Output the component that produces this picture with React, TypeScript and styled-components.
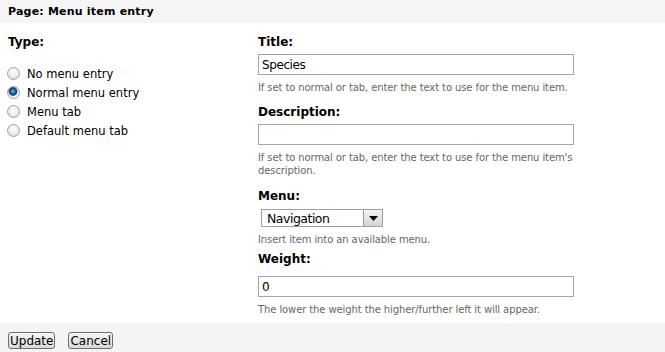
import React from 'react';
import styled, { createGlobalStyle } from 'styled-components';

const GlobalStyle = createGlobalStyle`
  html, body {
    margin: 0;
    padding: 0;
    background: #ffffff;
    font-family: 'DejaVu Sans', Verdana, sans-serif;
    color: #000000;
  }
`;

const Page = styled.div`
  width: 665px;
  height: 352px;
  display: flex;
  flex-direction: column;
  overflow: hidden;
`;

const Header = styled.div`
  height: 23px;
  display: flex;
  align-items: center;
  padding: 0 8px;
  background: #f5f5f5;
  font-size: 11px;
  font-weight: bold;
  letter-spacing: 0.2px;
`;

const Body = styled.div`
  flex: 1;
  display: grid;
  grid-template-columns: 250px 1fr;
  padding: 11px 8px 0;
`;

const Column = styled.div`
  display: flex;
  flex-direction: column;
`;

const Label = styled.div<{ $gap?: number }>`
  font-size: 12px;
  font-weight: bold;
  line-height: 16px;
  margin-bottom: ${(p) => p.$gap ?? 4}px;
`;

const RadioList = styled.div`
  display: flex;
  flex-direction: column;
  gap: 3px;
  margin-top: 12px;
`;

const RadioRow = styled.label`
  display: flex;
  align-items: flex-start;
  gap: 7px;
  margin-left: -1px;
  font-size: 11.5px;
  line-height: 16px;
`;

const RadioDot = styled.span<{ $checked?: boolean }>`
  box-sizing: border-box;
  margin-top: 1px;
  width: 13px;
  height: 13px;
  border-radius: 50%;
  border: 1px solid #a2a2a2;
  background: ${(p) =>
    p.$checked
      ? 'radial-gradient(circle at 45% 40%, #8fd0f5 0, #2a7fc0 1.5px, #0d3e6b 3.5px, #5a6f80 4.2px, #e4e4e4 4.8px, #fafafa 6px)'
      : 'radial-gradient(circle at 50% 35%, #ffffff 0, #ececec 55%, #d2d2d2 100%)'};
`;

const Field = styled.div<{ $top?: number }>`
  display: flex;
  flex-direction: column;
  margin-top: ${(p) => p.$top ?? 0}px;
`;

const TextInput = styled.input`
  box-sizing: border-box;
  width: 316px;
  height: 21px;
  border: 1px solid #a5a5a5;
  padding: 0 3px;
  font-family: 'DejaVu Sans', Verdana, sans-serif;
  font-size: 12px;
  letter-spacing: -0.4px;
  color: #000;
  outline: none;
`;

const Help = styled.div`
  font-size: 10px;
  letter-spacing: -0.1px;
  line-height: 13px;
  color: #666666;
  margin-top: 6px;
  width: 322px;
`;

const Select = styled.div`
  box-sizing: border-box;
  margin-top: 1px;
  margin-left: 3px;
  width: 122px;
  height: 18px;
  border: 1px solid #a0a0a0;
  display: flex;
  align-items: center;
  justify-content: space-between;
  font-size: 12.5px;
  letter-spacing: -0.5px;
  padding-left: 5px;
  background: #fff;
`;

const SelectButton = styled.span`
  box-sizing: border-box;
  width: 19px;
  height: 16px;
  border-left: 1px solid #9a9a9a;
  background: linear-gradient(#f4f4f4, #d4d4d4);
  display: flex;
  align-items: center;
  justify-content: center;
`;

const Footer = styled.div`
  height: 29px;
  box-sizing: border-box;
  background: #f4f4f4;
  display: flex;
  align-items: flex-start;
  gap: 13px;
  padding: 9px 8px 0;
`;

const Button = styled.button`
  font-family: 'DejaVu Sans', Verdana, sans-serif;
  font-size: 12px;
  height: 17px;
  padding: 0 1px;
  border: 1px solid #6e6e6e;
  border-radius: 3px;
  background: linear-gradient(#f6f6f6, #dadada);
  color: #000;
  line-height: 14px;
`;

const types = ['No menu entry', 'Normal menu entry', 'Menu tab', 'Default menu tab'];

export default function App() {
  return (
    <Page>
      <GlobalStyle />
      <Header>Page: Menu item entry</Header>
      <Body>
        <Column>
          <Label>Type:</Label>
          <RadioList>
            {types.map((t, i) => (
              <RadioRow key={t}>
                <RadioDot $checked={i === 1} />
                {t}
              </RadioRow>
            ))}
          </RadioList>
        </Column>
        <Column>
          <Field>
            <Label>Title:</Label>
            <TextInput defaultValue="Species" />
            <Help>If set to normal or tab, enter the text to use for the menu item.</Help>
          </Field>
          <Field $top={10}>
            <Label>Description:</Label>
            <TextInput defaultValue="" />
            <Help>
              If set to normal or tab, enter the text to use for the menu item's description.
            </Help>
          </Field>
          <Field $top={11}>
            <Label>Menu:</Label>
            <Select>
              Navigation
              <SelectButton>
                <svg width="9" height="5" viewBox="0 0 9 5">
                  <path d="M0 0h9L4.5 5z" fill="#000" />
                </svg>
              </SelectButton>
            </Select>
            <Help>Insert item into an available menu.</Help>
          </Field>
          <Field $top={5}>
            <Label $gap={9}>Weight:</Label>
            <TextInput defaultValue="0" />
            <Help>The lower the weight the higher/further left it will appear.</Help>
          </Field>
        </Column>
      </Body>
      <Footer>
        <Button>Update</Button>
        <Button>Cancel</Button>
      </Footer>
    </Page>
  );
}
